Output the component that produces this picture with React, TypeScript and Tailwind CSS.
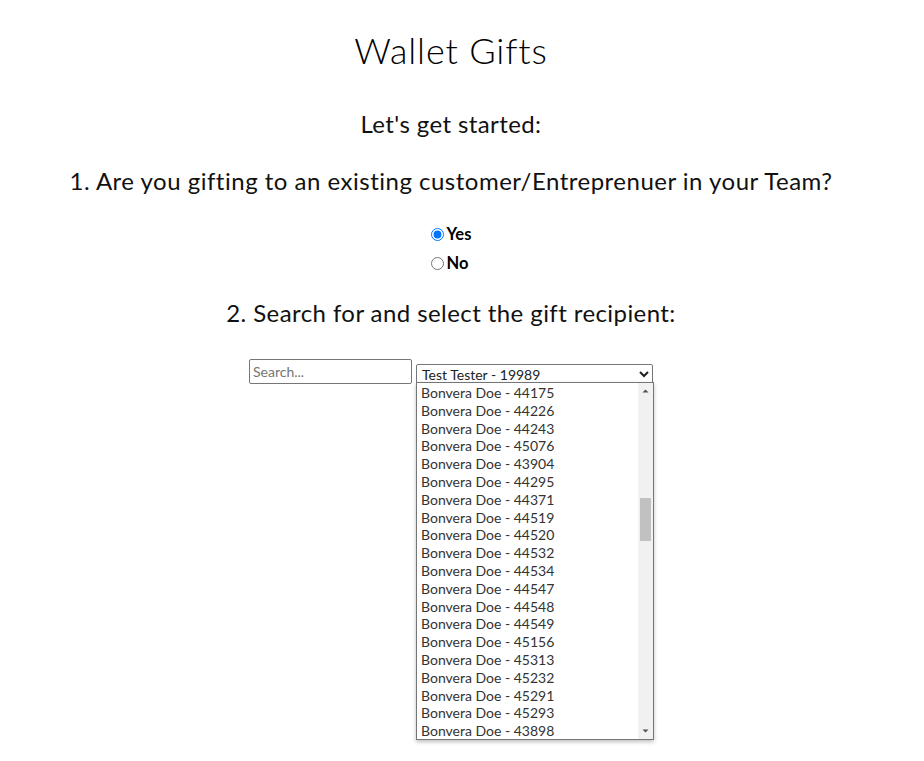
import React from 'react';

const recipients = [
  '44175', '44226', '44243', '45076', '43904', '44295', '44371', '44519', '44520', '44532',
  '44534', '44547', '44548', '44549', '45156', '45313', '45232', '45291', '45293', '43898',
];

const font = { fontFamily: 'Lato, "Open Sans", sans-serif' };

export default function App() {
  return (
    <div className="min-h-[761px] bg-white text-black pr-[22px]" style={font}>
      <div className="flex flex-col items-center">
        <h1 className="mt-[26px] text-[36px] leading-[48px] font-light tracking-[0.85px]">Wallet Gifts</h1>
        <p className="mt-[34px] text-[24px] leading-[32px] font-normal tracking-[0.4px] text-[#111]">Let's get started:</p>
        <p className="mt-[25px] text-[24px] leading-[32px] font-normal tracking-[0.5px] text-[#111]">
          1. Are you gifting to an existing customer/Entreprenuer in your Team?
        </p>

        <div className="mt-[27px] flex flex-col items-start gap-[9px] text-[16.5px] font-bold">
          <label className="flex items-center gap-[3px] leading-[20px]">
            <input type="radio" name="existing" defaultChecked className="m-0 w-[13px] h-[13px]" />
            Yes
          </label>
          <label className="flex items-center gap-[3px] leading-[20px]">
            <input type="radio" name="existing" className="m-0 w-[13px] h-[13px]" />
            No
          </label>
        </div>

        <p className="mt-[24px] text-[24px] leading-[32px] font-normal tracking-[0.42px] text-[#111]">2. Search for and select the gift recipient:</p>

        <div className="mt-[30px] flex items-start gap-[4px]">
          <input
            type="text"
            placeholder="Search..."
            className="w-[163px] h-[25px] px-[3px] text-[14px] border border-[#767676] rounded-[2px] placeholder:text-[#757575]"
            style={font}
          />
          <div className="relative mt-[3px]">
            <select
              className="w-[237px] h-[20px] text-[14px] leading-[16px] text-[#222] border border-[#767676] rounded-[2px] px-[1px] py-0 bg-white appearance-auto"
              style={font}
              defaultValue="t"
            >
              <option value="t">Test Tester - 19989</option>
            </select>

            <div className="absolute left-0 top-[20px] w-[238px] h-[358px] bg-white border border-[#767676] shadow-[0_2px_4px_rgba(0,0,0,0.25)] flex z-10">
              <ul className="flex-1 pt-[1px] overflow-hidden">
                {recipients.map((id) => (
                  <li key={id} className="h-[17.8px] leading-[17.8px] pl-[4px] text-[14px] text-[#333] whitespace-nowrap">
                    Bonvera Doe - {id}
                  </li>
                ))}
              </ul>
              <div className="w-[15px] bg-[#f1f1f1] flex flex-col items-center">
                <svg width="15" height="15" viewBox="0 0 15 15" className="shrink-0">
                  <path d="M4.5 9.5 L7.5 6.5 L10.5 9.5 Z" fill="#505050" />
                </svg>
                <div className="flex-1 w-full relative">
                  <div className="absolute left-[2px] right-[2px] top-[100px] h-[43px] bg-[#c1c1c1]" />
                </div>
                <svg width="15" height="15" viewBox="0 0 15 15" className="shrink-0">
                  <path d="M4.5 5.5 L7.5 8.5 L10.5 5.5 Z" fill="#505050" />
                </svg>
              </div>
            </div>
          </div>
        </div>
      </div>
    </div>
  );
}
